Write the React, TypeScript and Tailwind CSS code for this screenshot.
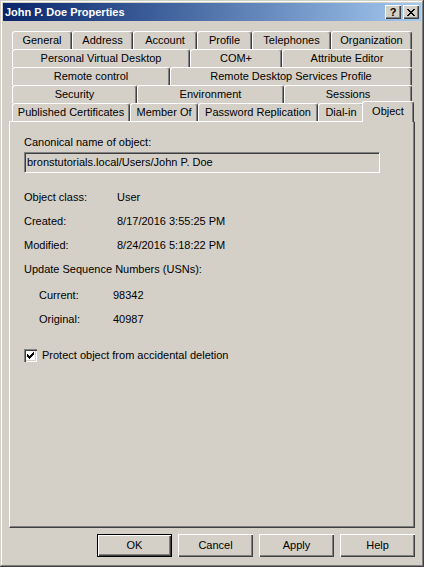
import React from "react";

type T = { label: string; w: string };

const rows: T[][] = [
  [
    { label: "General", w: "w-[60px]" },
    { label: "Address", w: "w-[61px]" },
    { label: "Account", w: "w-[64px]" },
    { label: "Profile", w: "w-[55px]" },
    { label: "Telephones", w: "w-[79px]" },
    { label: "Organization", w: "w-[81px]" },
  ],
  [
    { label: "Personal Virtual Desktop", w: "w-[178px]" },
    { label: "COM+", w: "w-[92px]" },
    { label: "Attribute Editor", w: "w-[130px]" },
  ],
  [
    { label: "Remote control", w: "w-[158px]" },
    { label: "Remote Desktop Services Profile", w: "w-[242px]" },
  ],
  [
    { label: "Security", w: "w-[125px]" },
    { label: "Environment", w: "w-[147px]" },
    { label: "Sessions", w: "w-[128px]" },
  ],
  [
    { label: "Published Certificates", w: "w-[118px]" },
    { label: "Member Of", w: "w-[68px]" },
    { label: "Password Replication", w: "w-[120px]" },
    { label: "Dial-in", w: "w-[46px]" },
  ],
];

const tabCls =
  "h-[18px] flex items-center justify-center border-t border-l border-r border-t-white border-l-white border-r-[#404040] shadow-[inset_-1px_0_#808080] rounded-t-[3px] text-[11px] leading-[13px] text-black whitespace-nowrap";

const btnCls =
  "w-[75px] h-[23px] flex items-center justify-center text-[11px] text-black shadow-[inset_1px_1px_#ffffff,inset_-1px_-1px_#404040,inset_-2px_-2px_#808080]";

function Row({ label, value, indent }: { label: string; value: string; indent?: boolean }) {
  return (
    <div className={indent ? "flex h-[13px] leading-[13px] pl-[15px]" : "flex h-[13px] leading-[13px]"}>
      <div className={indent ? "w-[74px]" : "w-[93px]"}>{label}</div>
      <div>{value}</div>
    </div>
  );
}

export default function App() {
  return (
    <div className="w-[424px] h-[567px] bg-[#d4d0c8] p-[3px] font-['Liberation_Sans',Arial,sans-serif] text-[11px] text-black shadow-[inset_-1px_-1px_#404040,inset_1px_1px_#d4d0c8,inset_-2px_-2px_#808080,inset_2px_2px_#ffffff] overflow-hidden">
      {/* Title bar */}
      <div className="h-[18px] flex items-center justify-between bg-gradient-to-r from-[#0a246a] to-[#a6caf0]">
        <div className="pl-[2px] text-white font-bold text-[11px] leading-[13px]">John P. Doe Properties</div>
        <div className="flex items-center pr-[2px]">
          <div className="w-[16px] h-[14px] bg-[#d4d0c8] flex items-center justify-center font-bold text-[11px] leading-[11px] shadow-[inset_1px_1px_#ffffff,inset_-1px_-1px_#404040,inset_-2px_-2px_#808080]">
            ?
          </div>
          <div className="ml-[2px] w-[16px] h-[14px] bg-[#d4d0c8] flex items-center justify-center shadow-[inset_1px_1px_#ffffff,inset_-1px_-1px_#404040,inset_-2px_-2px_#808080]">
            <svg width="8" height="7" viewBox="0 0 8 7" shapeRendering="crispEdges">
              <path d="M0 0h2v1h-2z M6 0h2v1h-2z M1 1h2v1h-2z M5 1h2v1h-2z M2 2h4v1h-4z M3 3h2v1h-2z M2 4h4v1h-4z M1 5h2v1h-2z M5 5h2v1h-2z M0 6h2v1h-2z M6 6h2v1h-2z" fill="#000" />
            </svg>
          </div>
        </div>
      </div>

      {/* Tabs + panel */}
      <div className="mt-[10px] ml-[6px] w-[406px]">
        {rows.map((r, i) => (
          <div key={i} className="flex items-end h-[18px] pl-[3px]">
            {r.map((t) => (
              <div key={t.label} className={`${tabCls} ${t.w}`}>
                {t.label}
              </div>
            ))}
            {i === 4 && (
              <div className="relative z-10 -mx-[2px] -mb-[1px] w-[52px] h-[21px] flex items-center justify-center pb-[1px] bg-[#d4d0c8] border-t border-l border-r border-t-white border-l-white border-r-[#404040] shadow-[inset_-1px_0_#808080] rounded-t-[3px] text-[11px] leading-[13px]">
                Object
              </div>
            )}
          </div>
        ))}
        <div className="w-[406px] h-[407px] border border-t-white border-l-white border-r-[#404040] border-b-[#404040] shadow-[inset_-1px_-1px_#808080] pl-[14px] pt-[14px]">
          <div className="h-[13px] leading-[13px]">Canonical name of object:</div>
          <div className="mt-[3px] w-[356px] h-[21px] flex items-center pl-[2px] border border-t-[#808080] border-l-[#808080] border-r-white border-b-white shadow-[inset_1px_1px_#404040,inset_-1px_-1px_#d4d0c8] leading-[13px]">
            bronstutorials.local/Users/John P. Doe
          </div>
          <div className="mt-[18px]">
            <Row label="Object class:" value="User" />
          </div>
          <div className="mt-[11px]">
            <Row label="Created:" value="8/17/2016 3:55:25 PM" />
          </div>
          <div className="mt-[11px]">
            <Row label="Modified:" value="8/24/2016 5:18:22 PM" />
          </div>
          <div className="mt-[11px] h-[13px] leading-[13px]">Update Sequence Numbers (USNs):</div>
          <div className="mt-[13px]">
            <Row label="Current:" value="98342" indent />
          </div>
          <div className="mt-[11px]">
            <Row label="Original:" value="40987" indent />
          </div>
          <div className="mt-[23px] flex items-center h-[13px]">
            <div className="w-[13px] h-[13px] bg-white flex items-center justify-center shadow-[inset_1px_1px_#808080,inset_2px_2px_#404040,inset_-1px_-1px_#ffffff,inset_-2px_-2px_#d4d0c8]">
              <svg width="7" height="7" viewBox="0 0 7 7" shapeRendering="crispEdges">
                <path d="M6 0h1v3h-1z M5 1h1v3h-1z M4 2h1v3h-1z M3 3h1v3h-1z M2 4h1v3h-1z M1 3h1v3h-1z M0 2h1v3h-1z" fill="#000" />
              </svg>
            </div>
            <div className="ml-[5px] leading-[13px]">Protect object from accidental deletion</div>
          </div>
        </div>
      </div>

      {/* Buttons */}
      <div className="mt-[6px] pl-[94px] flex gap-[6px]">
        <div className={`${btnCls} border border-black`}>OK</div>
        <div className={btnCls}>Cancel</div>
        <div className={btnCls}>Apply</div>
        <div className={btnCls}>Help</div>
      </div>
    </div>
  );
}
